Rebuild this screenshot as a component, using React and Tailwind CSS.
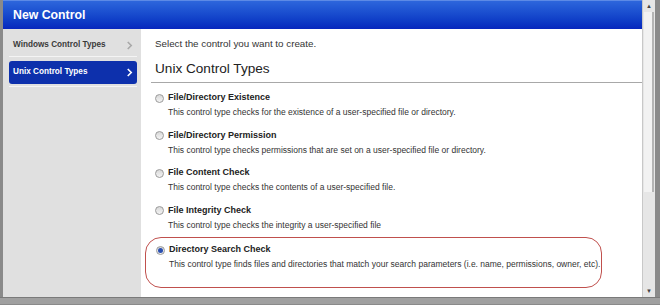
import React from 'react';

const items = [
    { title: 'File/Directory Existence', desc: 'This control type checks for the existence of a user-specified file or directory.' },
    { title: 'File/Directory Permission', desc: 'This control type checks permissions that are set on a user-specified file or directory.' },
    { title: 'File Content Check', desc: 'This control type checks the contents of a user-specified file.' },
    { title: 'File Integrity Check', desc: 'This control type checks the integrity a user-specified file' },
    { title: 'Directory Search Check', desc: 'This control type finds files and directories that match your search parameters (i.e. name, permissions, owner, etc).', selected: true },
];

const Radio = ({ checked }) => (
    <span className="w-[9px] h-[9px] rounded-full border border-[#9a9a9a] bg-gradient-to-b from-[#d8d8d8] to-[#f4f4f4] flex items-center justify-center shrink-0">
        {checked && <span className="w-[5px] h-[5px] rounded-full bg-[#2a4fb0]" />}
    </span>
);

const Chevron = ({ className }) => (
    <svg viewBox="0 0 8 10" className={className} fill="none" stroke="currentColor" strokeWidth="1.8">
        <path d="M2 1l4 4-4 4" />
    </svg>
);

export default function App() {
    return (
        <div className="w-[660px] h-[305px] flex flex-col bg-[#a4a4a4] font-['Liberation_Sans',Arial,sans-serif]">
            <div className="flex flex-1 min-h-0 border-l-[3px] border-[#8a8a8a]">
                {/* main */}
                <div className="flex-1 flex flex-col min-w-0">
                    <div className="h-[29px] shrink-0 flex items-center pl-[10px] bg-gradient-to-b from-[#2d66dc] to-[#0826bd] border-t border-[#5c8ae6]">
                        <span className="text-white font-bold text-[12.3px]">New Control</span>
                    </div>
                    <div className="flex flex-1 min-h-0">
                        {/* sidebar */}
                        <div className="w-[138px] shrink-0 bg-[#e0e0e0] flex flex-col pt-[6px]">
                            <div className="h-[22px] ml-[6px] mr-[4px] flex items-center justify-between pl-[4px] pr-[4px] border-b border-[#f4f4f4]">
                                <span className="text-[8.2px] font-bold text-[#3a3a3a]">Windows Control Types</span>
                                <Chevron className="w-[7px] h-[9px] text-[#a8a8a8]" />
                            </div>
                            <div className="ml-[6px] mr-[4px] pb-[2px] pt-[4px] border-b border-[#f4f4f4]">
                                <div className="h-[23px] rounded-[3px] bg-[#0d30ac] flex items-center justify-between pl-[4px] pr-[4px]">
                                    <span className="text-[8.2px] font-bold text-white">Unix Control Types</span>
                                    <Chevron className="w-[7px] h-[9px] text-white" />
                                </div>
                            </div>
                        </div>
                        {/* content */}
                        <div className="flex-1 bg-white flex flex-col pl-[10px] pt-[8px]">
                            <p className="pl-[4px] text-[9.8px] text-[#333] leading-[14px]">Select the control you want to create.</p>
                            <h2 className="pl-[4px] mt-[8px] text-[13.6px] text-[#222] leading-[20px] pb-[3px] border-b border-[#a8a8a8]">Unix Control Types</h2>
                            <div className="flex flex-col mt-[8px] gap-[9.5px]">
                                {items.map((it) => (
                                    <div
                                        key={it.title}
                                        className={it.selected
                                            ? 'w-[457px] mt-[-4px] -ml-[6px] pl-[10px] pt-[5px] pb-[16px] border-[1.5px] border-[#c0504d] rounded-[16px]'
                                            : 'pl-[4px]'}
                                    >
                                        <div className="flex items-center gap-[4px] h-[14px]">
                                            <Radio checked={it.selected} />
                                            <span className="text-[9px] font-bold text-[#222]">{it.title}</span>
                                        </div>
                                        <p className="pl-[13px] mt-[1px] text-[8.5px] text-[#333] leading-[13px] whitespace-nowrap">{it.desc}</p>
                                    </div>
                                ))}
                            </div>
                        </div>
                    </div>
                </div>
                {/* scrollbar */}
                <div className="w-[13px] shrink-0 bg-[#e6e6e6] border-l border-[#c8c8c8] flex flex-col">
                    <div className="h-[12px] flex items-center justify-center text-[6px] text-[#444]">▲</div>
                    <div className="h-[180px] mx-[1px] bg-[#f2f2f2] border-r-[2px] border-[#b4b4b4]" />
                    <div className="flex-1" />
                    <div className="h-[12px] flex items-center justify-center text-[6px] text-[#444]">▼</div>
                </div>
                <div className="w-[5px] shrink-0 bg-[#8a8a8a]" />
            </div>
            <div className="h-[8px] shrink-0 bg-[#a0a0a0] border-t border-[#7a7a7a] border-b border-b-[#8a8a8a]" />
        </div>
    );
}
